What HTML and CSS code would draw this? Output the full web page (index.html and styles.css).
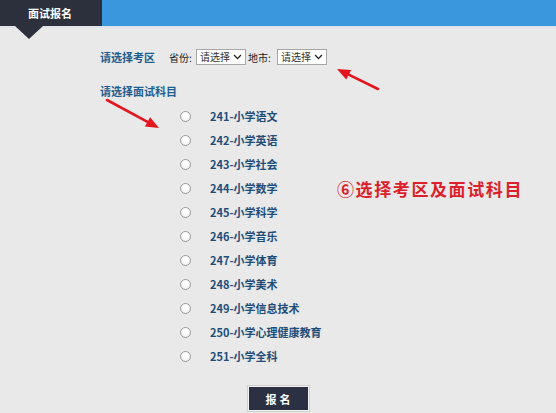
FILE: index.html
```html
<!DOCTYPE html>
<html lang="zh">
<head>
<meta charset="utf-8">
<title>面试报名</title>
<link rel="stylesheet" href="styles.css">
</head>
<body>
<div class="page">
  <div class="header">
    <div class="tab">面试报名<span class="tab-pointer"></span></div>
    <div class="bar"></div>
  </div>
  <div class="main">
    <div class="row-area">
      <span class="section-title">请选择考区</span>
      <span class="field-label">省份:</span>
      <div class="select">请选择<svg class="chev" viewBox="0 0 10 7" width="9" height="6"><path d="M1 1.2 L5 5.4 L9 1.2" fill="none" stroke="#222" stroke-width="1.6"/></svg></div>
      <span class="field-label field-label-2">地市:</span>
      <div class="select">请选择<svg class="chev" viewBox="0 0 10 7" width="9" height="6"><path d="M1 1.2 L5 5.4 L9 1.2" fill="none" stroke="#222" stroke-width="1.6"/></svg></div>
    </div>
    <div class="section-title subject-title">请选择面试科目</div>
    <ul class="subjects">
      <li><span class="radio"></span><span class="subject">241-小学语文</span></li>
      <li><span class="radio"></span><span class="subject">242-小学英语</span></li>
      <li><span class="radio"></span><span class="subject">243-小学社会</span></li>
      <li><span class="radio"></span><span class="subject">244-小学数学</span></li>
      <li><span class="radio"></span><span class="subject">245-小学科学</span></li>
      <li><span class="radio"></span><span class="subject">246-小学音乐</span></li>
      <li><span class="radio"></span><span class="subject">247-小学体育</span></li>
      <li><span class="radio"></span><span class="subject">248-小学美术</span></li>
      <li><span class="radio"></span><span class="subject">249-小学信息技术</span></li>
      <li><span class="radio"></span><span class="subject">250-小学心理健康教育</span></li>
      <li><span class="radio"></span><span class="subject">251-小学全科</span></li>
    </ul>
  </div>
  <div class="actions"><button class="submit">报名</button></div>

  <div class="annotation">⑥选择考区及面试科目</div>
  <svg class="arrows" width="556" height="413" viewBox="0 0 556 413">
    <line x1="378" y1="89" x2="348.7" y2="74.7" stroke="#e3161f" stroke-width="2.6" stroke-linecap="round"/>
    <polygon points="337,69 351.2,70 346.2,79.4" fill="#e3161f"/>
    <line x1="107" y1="100" x2="147.5" y2="121.8" stroke="#e3161f" stroke-width="2.6" stroke-linecap="round"/>
    <polygon points="159,128 144.9,126.4 150.1,117.2" fill="#e3161f"/>
  </svg>
</div>
</body>
</html>
```
FILE: styles.css
```css
html, body {
  margin: 0;
  padding: 0;
}
body {
  background: #e9e9e9;
  font-family: "Noto Sans CJK SC", "Liberation Sans", sans-serif;
  width: 556px;
  height: 413px;
  overflow: hidden;
}
.page {
  position: relative;
  width: 556px;
  height: 413px;
}
.header {
  display: flex;
  height: 26px;
  border-bottom: 2px solid #dfe4ea;
}
.tab {
  position: relative;
  width: 102px;
  background: #2b303c;
  color: #fff;
  font-size: 11px;
  font-weight: bold;
  line-height: 26px;
  padding-left: 28px;
  box-sizing: border-box;
}
.tab-pointer {
  position: absolute;
  left: 15px;
  top: 26px;
  width: 0;
  height: 0;
  border-left: 14px solid transparent;
  border-right: 14px solid transparent;
  border-top: 13px solid #2b303c;
}
.bar {
  flex: 1;
  background: #3b97dd;
}
.main {
  padding: 21px 0 0 100px;
}
.row-area {
  display: flex;
  align-items: center;
  height: 16px;
}
.section-title {
  color: #1f5e8e;
  font-size: 11px;
  font-weight: bold;
  line-height: 16px;
}
.row-area .section-title {
  width: 69px;
}
.field-label {
  font-size: 10px;
  color: #222;
  width: 27px;
}
.field-label-2 {
  margin-left: 2px;
  width: 29px;
}
.select {
  width: 50px;
  height: 16px;
  box-sizing: border-box;
  border: 1px solid #a6a6a6;
  background: #fff;
  font-size: 10px;
  color: #333;
  display: flex;
  align-items: center;
  justify-content: space-between;
  padding: 0 3px 0 3px;
  line-height: 14px;
}
.chev {
  display: block;
}
.subject-title {
  margin-top: 18px;
}
.subjects {
  list-style: none;
  margin: 5px 0 0 0;
  padding: 0;
}
.subjects li {
  display: flex;
  align-items: center;
  height: 24px;
}
.radio {
  width: 11px;
  height: 11px;
  box-sizing: border-box;
  border: 1px solid #9a9a9a;
  border-radius: 50%;
  background: radial-gradient(circle at 50% 40%, #ffffff 40%, #e6e6e6 100%);
  margin-left: 80px;
}
.subject {
  margin-left: 19px;
  color: #1f4d78;
  font-size: 11px;
  font-weight: bold;
}
.actions {
  display: flex;
  justify-content: center;
  margin-top: 18px;
}
.submit {
  width: 61px;
  height: 25px;
  box-sizing: border-box;
  background: #2b3142;
  border: 1px solid #f3f3f3;
  outline: 1px solid #d0d0d0;
  color: #fff;
  font-family: "Noto Sans CJK SC", sans-serif;
  font-size: 11px;
  font-weight: bold;
  letter-spacing: 3px;
  padding: 0 0 0 3px;
}
.annotation {
  position: absolute;
  left: 337px;
  top: 177px;
  color: #dc1f2a;
  font-size: 17px;
  font-weight: bold;
  letter-spacing: 1.6px;
  line-height: 24px;
  white-space: nowrap;
}
.arrows {
  position: absolute;
  left: 0;
  top: 0;
  pointer-events: none;
}
```
